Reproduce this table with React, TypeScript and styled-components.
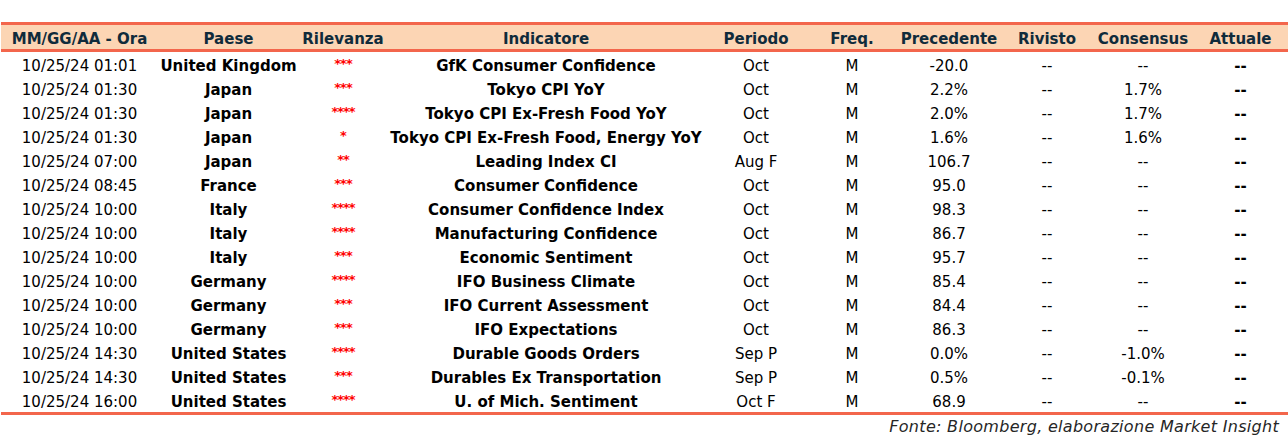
import React from "react";
import styled, { createGlobalStyle } from "styled-components";

const GlobalStyle = createGlobalStyle`
  html, body {
    margin: 0;
    padding: 0;
    background: #ffffff;
  }
  body {
    font-family: "DejaVu Sans", "Liberation Sans", sans-serif;
  }
`;

const colors = {
  rule: "#f3664c",
  band: "#fcd5b4",
  headText: "#102b3b",
  text: "#000000",
  star: "#ff0000",
  note: "#262626",
};

const COLUMNS = "157px 141px 88px 318px 102px 90px 104px 92px 100px 95px";

const Page = styled.div`
  padding: 22px 0 0 1px;
  width: 1287px;
`;

const Table = styled.div`
  border-top: 3px solid ${colors.rule};
  border-bottom: 3px solid ${colors.rule};
`;

const Row = styled.div<{ $head?: boolean }>`
  display: grid;
  grid-template-columns: ${COLUMNS};
  box-sizing: border-box;
  height: ${(p) => (p.$head ? "27px" : "24px")};
  padding-top: ${(p) => (p.$head ? "4px" : "3px")};
  align-items: center;
  background: ${(p) => (p.$head ? colors.band : "transparent")};
  border-bottom: ${(p) => (p.$head ? `3px solid ${colors.rule}` : "none")};
`;

const HeadCell = styled.div`
  text-align: center;
  font-size: 15px;
  font-weight: 700;
  color: ${colors.headText};
  white-space: nowrap;
`;

const Cell = styled.div<{ $bold?: boolean }>`
  text-align: center;
  font-size: 15px;
  font-weight: ${(p) => (p.$bold ? 700 : 400)};
  color: ${colors.text};
  white-space: nowrap;
`;

const Stars = styled.div`
  text-align: center;
  font-size: 13px;
  font-weight: 700;
  color: ${colors.star};
  letter-spacing: -1px;
  line-height: 1;
  transform: translateY(-2px);
`;

const Note = styled.div`
  text-align: right;
  padding: 2px 9px 0 0;
  font-size: 16px;
  font-style: italic;
  color: ${colors.note};
  letter-spacing: 0.3px;
`;

type Event = [string, string, string, string, string, string, string, string];

const HEADERS = [
  "MM/GG/AA - Ora",
  "Paese",
  "Rilevanza",
  "Indicatore",
  "Periodo",
  "Freq.",
  "Precedente",
  "Rivisto",
  "Consensus",
  "Attuale",
];

// data, paese, rilevanza, indicatore, periodo, precedente, rivisto, consensus
const EVENTS: Event[] = [
  ["10/25/24 01:01", "United Kingdom", "***", "GfK Consumer Confidence", "Oct", "-20.0", "--", "--"],
  ["10/25/24 01:30", "Japan", "***", "Tokyo CPI YoY", "Oct", "2.2%", "--", "1.7%"],
  ["10/25/24 01:30", "Japan", "****", "Tokyo CPI Ex-Fresh Food YoY", "Oct", "2.0%", "--", "1.7%"],
  ["10/25/24 01:30", "Japan", "*", "Tokyo CPI Ex-Fresh Food, Energy YoY", "Oct", "1.6%", "--", "1.6%"],
  ["10/25/24 07:00", "Japan", "**", "Leading Index CI", "Aug F", "106.7", "--", "--"],
  ["10/25/24 08:45", "France", "***", "Consumer Confidence", "Oct", "95.0", "--", "--"],
  ["10/25/24 10:00", "Italy", "****", "Consumer Confidence Index", "Oct", "98.3", "--", "--"],
  ["10/25/24 10:00", "Italy", "****", "Manufacturing Confidence", "Oct", "86.7", "--", "--"],
  ["10/25/24 10:00", "Italy", "***", "Economic Sentiment", "Oct", "95.7", "--", "--"],
  ["10/25/24 10:00", "Germany", "****", "IFO Business Climate", "Oct", "85.4", "--", "--"],
  ["10/25/24 10:00", "Germany", "***", "IFO Current Assessment", "Oct", "84.4", "--", "--"],
  ["10/25/24 10:00", "Germany", "***", "IFO Expectations", "Oct", "86.3", "--", "--"],
  ["10/25/24 14:30", "United States", "****", "Durable Goods Orders", "Sep P", "0.0%", "--", "-1.0%"],
  ["10/25/24 14:30", "United States", "***", "Durables Ex Transportation", "Sep P", "0.5%", "--", "-0.1%"],
  ["10/25/24 16:00", "United States", "****", "U. of Mich. Sentiment", "Oct F", "68.9", "--", "--"],
];

const App = () => (
  <>
    <GlobalStyle />
    <Page>
      <Table>
        <Row $head>
          {HEADERS.map((h) => (
            <HeadCell key={h}>{h}</HeadCell>
          ))}
        </Row>
        {EVENTS.map(([date, country, stars, name, period, prev, revised, consensus], i) => (
          <Row key={i}>
            <Cell>{date}</Cell>
            <Cell $bold>{country}</Cell>
            <Stars>{stars}</Stars>
            <Cell $bold>{name}</Cell>
            <Cell>{period}</Cell>
            <Cell>M</Cell>
            <Cell>{prev}</Cell>
            <Cell>{revised}</Cell>
            <Cell>{consensus}</Cell>
            <Cell $bold>--</Cell>
          </Row>
        ))}
      </Table>
      <Note>Fonte: Bloomberg, elaborazione Market Insight</Note>
    </Page>
  </>
);

export default App;
